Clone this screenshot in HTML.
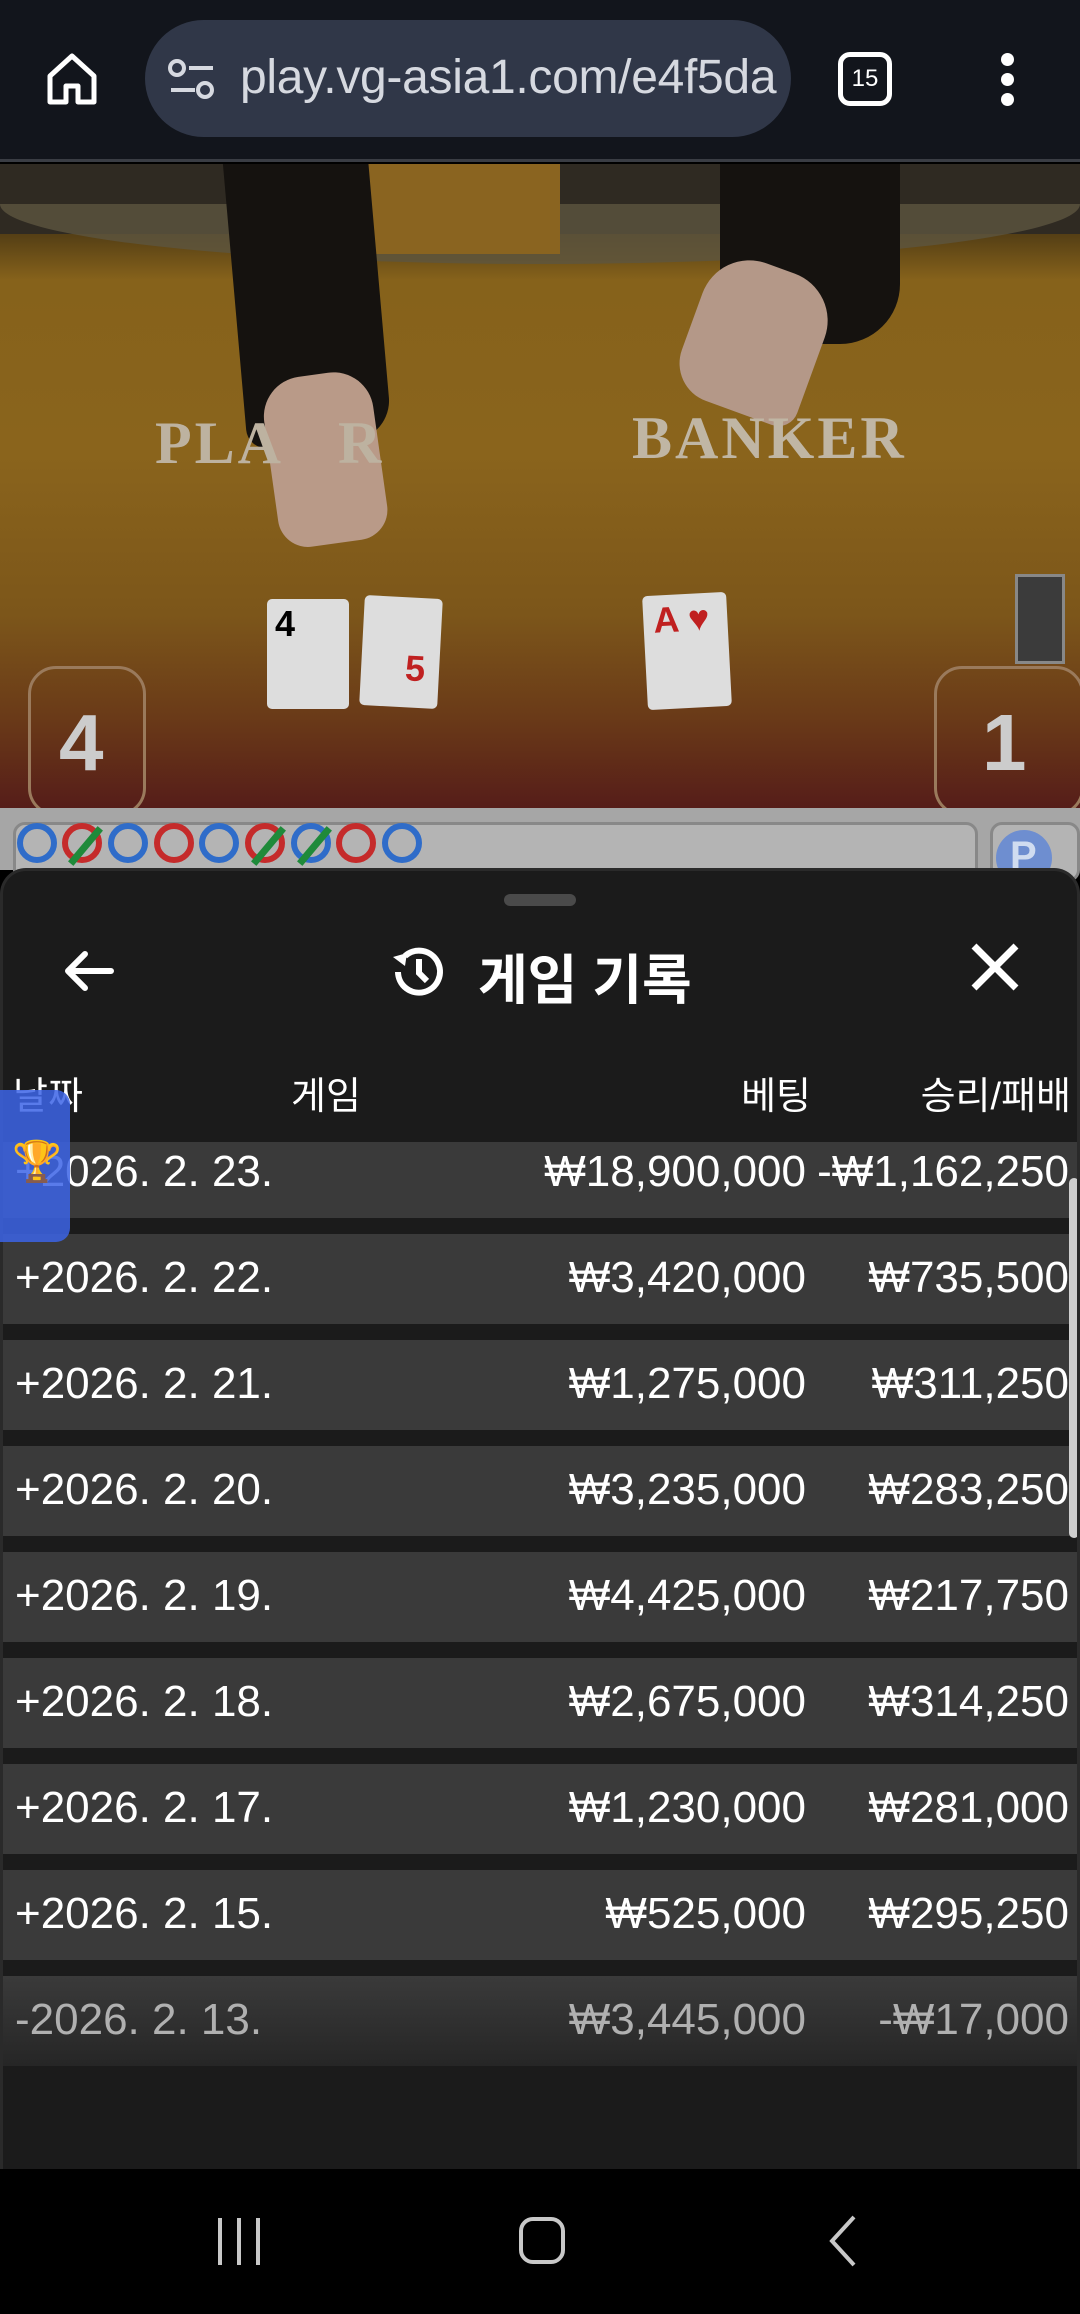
<!DOCTYPE html>
<html><head><meta charset="utf-8">
<style>
*{margin:0;padding:0;box-sizing:border-box}
body{width:1080px;height:2314px;overflow:hidden;background:#000;font-family:"Liberation Sans","Noto Sans CJK KR",sans-serif;position:relative}
.abs{position:absolute}
#top{left:0;top:0;width:1080px;height:162px;background:#12151c;border-bottom:3px solid #3a3d44}
#pill{left:145px;top:20px;width:646px;height:117px;border-radius:59px;background:#303748;overflow:hidden}
#url{left:95px;top:30px;font-size:48px;color:#d6d9e0;white-space:nowrap;letter-spacing:-0.3px}
#video{left:0;top:164px;width:1080px;height:644px;background:linear-gradient(180deg,#3a2a12 0%,#4e3a14 10%,#86621b 18%,#8a641c 45%,#7c561a 70%,#6a3a18 86%,#561d19 100%);overflow:hidden}
#road{left:0;top:808px;width:1080px;height:62px;background:#a6a6a6}
#sheet{left:0;top:868px;width:1080px;height:1301px;background:#1b1b1b;border-radius:26px 26px 0 0;overflow:hidden;border:3px solid #2a2a2a;border-bottom:none}
.row{position:absolute;left:0;width:1074px;height:90px;background:#3a3a3a;color:#fff;font-size:44px}
.row span{position:absolute;top:19px}
.d{left:12px}.b{right:271px}.w{right:8px}
.hd{position:absolute;top:194px;color:#fff;font-size:38px}
#nav{left:0;top:2169px;width:1080px;height:145px;background:#000}
.circ{position:absolute;top:15px;width:40px;height:40px;border-radius:50%;border:6px solid #2f6cc9}
.red{border-color:#c52b2b}
.sl{position:absolute;left:14px;top:-6px;width:7px;height:46px;background:#1f8a3a;transform:rotate(40deg)}
</style></head><body>

<div id="top" class="abs">
  <svg class="abs" style="left:44px;top:50px" width="56" height="56" viewBox="0 0 56 56"><path d="M6 26 L28 6 L50 26 V52 H34 V36 H22 V52 H6 Z" fill="none" stroke="#fff" stroke-width="5" stroke-linejoin="round"/></svg>
  <div id="pill" class="abs">
    <svg class="abs" style="left:22px;top:38px" width="50" height="44" viewBox="0 0 50 44"><circle cx="10" cy="10" r="7" fill="none" stroke="#d6d9e0" stroke-width="4"/><line x1="22" y1="10" x2="46" y2="10" stroke="#d6d9e0" stroke-width="4"/><line x1="4" y1="32" x2="28" y2="32" stroke="#d6d9e0" stroke-width="4"/><circle cx="38" cy="32" r="7" fill="none" stroke="#d6d9e0" stroke-width="4"/></svg>
    <div id="url" class="abs">play.vg-asia1.com/e4f5da</div>
  </div>
  <div class="abs" style="left:838px;top:52px;width:54px;height:54px;border:5px solid #fff;border-radius:12px;color:#fff;font-size:24px;text-align:center;line-height:44px">15</div>
  <div class="abs" style="left:1001px;top:53px;width:13px;height:13px;border-radius:50%;background:#fff"></div>
  <div class="abs" style="left:1001px;top:73px;width:13px;height:13px;border-radius:50%;background:#fff"></div>
  <div class="abs" style="left:1001px;top:93px;width:13px;height:13px;border-radius:50%;background:#fff"></div>
</div>

<div id="video" class="abs">
  <div class="abs" style="left:0;top:0;width:1080px;height:70px;background:#2f2a22"></div>
  <div class="abs" style="left:0;top:40px;width:1080px;height:60px;background:#5d5540;border-radius:0 0 50% 50%/0 0 100% 100%;opacity:.8"></div>
  <div class="abs" style="left:300px;top:0;width:260px;height:90px;background:#8a6420"></div>
  <div class="abs" style="left:235px;top:-10px;width:145px;height:290px;background:#15120f;border-radius:0 0 40px 20px;transform:rotate(-5deg)"></div>
  <div class="abs" style="left:720px;top:-10px;width:180px;height:190px;background:#15120f;border-radius:0 0 60px 30px"></div>
  <div class="abs" style="left:270px;top:210px;width:110px;height:170px;background:#b99a88;border-radius:40px 40px 30px 30px;transform:rotate(-8deg)"></div>
  <div class="abs" style="left:690px;top:100px;width:130px;height:150px;background:#b49888;border-radius:50px 50px 20px 40px;transform:rotate(20deg)"></div>
  <div class="abs" style="left:155px;top:245px;font-family:'Liberation Serif',serif;font-size:60px;font-weight:bold;color:#bdb2a0;letter-spacing:3px">PLA&nbsp;&nbsp;&nbsp;R</div>
  <div class="abs" style="left:632px;top:240px;font-family:'Liberation Serif',serif;font-size:60px;font-weight:bold;color:#c0b6a4;letter-spacing:3px">BANKER</div>
  <div class="abs" style="left:267px;top:435px;width:82px;height:110px;background:#ddd;border-radius:5px;font-size:36px;font-weight:bold;padding:4px 8px">4</div>
  <div class="abs" style="left:362px;top:433px;width:78px;height:110px;background:#ddd;border-radius:5px;transform:rotate(3deg);color:#c02020;font-size:36px;font-weight:bold;padding:50px 0 0 44px">5</div>
  <div class="abs" style="left:645px;top:430px;width:84px;height:114px;background:#ddd;border-radius:5px;transform:rotate(-3deg);color:#c02020;font-size:36px;font-weight:bold;padding:4px 10px">A ♥</div>
  <div class="abs" style="left:1015px;top:410px;width:50px;height:90px;background:#3b3b3b;border:3px solid #888"></div>
  <div class="abs" style="left:28px;top:502px;width:118px;height:150px;border:3px solid #9a7a5c;border-radius:28px;color:#ccc;font-size:80px;font-weight:bold;padding:28px 0 0 28px">4</div>
  <div class="abs" style="left:934px;top:502px;width:150px;height:150px;border:3px solid #9a7a5c;border-radius:28px;color:#ccc;font-size:80px;font-weight:bold;padding:28px 0 0 45px">1</div>
</div>

<div id="road" class="abs">
  <div class="abs" style="left:13px;top:14px;width:965px;height:60px;border:3px solid #888;border-radius:12px;background:#b4b4b4"></div>
  <div class="abs" style="left:14px;top:0">
    <div class="circ" style="left:3px"></div>
    <div class="circ red" style="left:48px"><div class="sl"></div></div>
    <div class="circ" style="left:94px"></div>
    <div class="circ red" style="left:140px"></div>
    <div class="circ" style="left:185px"></div>
    <div class="circ red" style="left:231px"><div class="sl"></div></div>
    <div class="circ" style="left:277px"><div class="sl"></div></div>
    <div class="circ red" style="left:322px"></div>
    <div class="circ" style="left:368px"></div>
  </div>
  <div class="abs" style="left:990px;top:14px;width:90px;height:60px;border:3px solid #888;border-radius:12px;background:#b4b4b4"></div>
  <div class="abs" style="left:996px;top:22px;width:56px;height:56px;border-radius:50%;background:#6e8ed0;color:#d0dcf0;font-size:40px;font-weight:bold;padding:4px 0 0 14px">P</div>
</div>

<div id="sheet" class="abs">
  <div class="row" style="top:271px;height:76px"><span class="d" style="top:5px">+2026. 2. 23.</span><span class="b" style="top:5px">₩18,900,000</span><span class="w" style="top:5px">-₩1,162,250</span></div>
  <div class="row" style="top:363px"><span class="d">+2026. 2. 22.</span><span class="b">₩3,420,000</span><span class="w">₩735,500</span></div>
  <div class="row" style="top:469px"><span class="d">+2026. 2. 21.</span><span class="b">₩1,275,000</span><span class="w">₩311,250</span></div>
  <div class="row" style="top:575px"><span class="d">+2026. 2. 20.</span><span class="b">₩3,235,000</span><span class="w">₩283,250</span></div>
  <div class="row" style="top:681px"><span class="d">+2026. 2. 19.</span><span class="b">₩4,425,000</span><span class="w">₩217,750</span></div>
  <div class="row" style="top:787px"><span class="d">+2026. 2. 18.</span><span class="b">₩2,675,000</span><span class="w">₩314,250</span></div>
  <div class="row" style="top:893px"><span class="d">+2026. 2. 17.</span><span class="b">₩1,230,000</span><span class="w">₩281,000</span></div>
  <div class="row" style="top:999px"><span class="d">+2026. 2. 15.</span><span class="b">₩525,000</span><span class="w">₩295,250</span></div>
  <div class="row" style="top:1105px;background:linear-gradient(#3a3a3a,#262626);color:#b0b0b0"><span class="d">-2026. 2. 13.</span><span class="b">₩3,445,000</span><span class="w">-₩17,000</span></div>
  <div class="abs" style="left:1066px;top:307px;width:10px;height:360px;background:#cfcfcf;border-radius:5px"></div>

  <div class="abs" style="left:501px;top:23px;width:72px;height:12px;border-radius:6px;background:#4a4a4a"></div>
  <svg class="abs" style="left:58px;top:75px" width="56" height="50" viewBox="0 0 56 50"><path d="M50 25 H8 M24 8 L7 25 L24 42" fill="none" stroke="#fff" stroke-width="6" stroke-linecap="round" stroke-linejoin="round"/></svg>
  <svg class="abs" style="left:385px;top:71px" width="60" height="60" viewBox="0 0 60 60"><path d="M10 30 A21 21 0 1 0 17 14" fill="none" stroke="#fff" stroke-width="6"/><path d="M5 15 L19 11 L17 24 Z" fill="#fff"/><path d="M31 17 V31 L39 39" fill="none" stroke="#fff" stroke-width="6"/></svg>
  <div class="abs" style="left:475px;top:65px;color:#fff;font-size:54px;font-weight:bold">게임 기록</div>
  <svg class="abs" style="left:966px;top:70px" width="52" height="52" viewBox="0 0 52 52"><path d="M5 5 L47 47 M47 5 L5 47" stroke="#fff" stroke-width="7"/></svg>
  <div class="hd" style="left:10px">날짜</div>
  <div class="hd" style="left:288px">게임</div>
  <div class="hd" style="right:266px">베팅</div>
  <div class="hd" style="right:6px">승리/패배</div>
</div>

<div class="abs" style="left:0;top:1090px;width:70px;height:152px;background:rgba(60,100,230,.85);border-radius:0 14px 14px 0"></div>
<div class="abs" style="left:12px;top:1138px;font-size:40px">🏆</div>

<div id="nav" class="abs">
  <div class="abs" style="left:218px;top:49px;width:4px;height:47px;background:#c8c8c8"></div>
  <div class="abs" style="left:237px;top:49px;width:4px;height:47px;background:#c8c8c8"></div>
  <div class="abs" style="left:256px;top:49px;width:4px;height:47px;background:#c8c8c8"></div>
  <div class="abs" style="left:519px;top:48px;width:46px;height:47px;border:4px solid #c8c8c8;border-radius:14px"></div>
  <svg class="abs" style="left:828px;top:46px" width="30" height="52" viewBox="0 0 30 52"><path d="M26 2 L4 26 L26 50" fill="none" stroke="#c8c8c8" stroke-width="4"/></svg>
</div>
</body></html>
